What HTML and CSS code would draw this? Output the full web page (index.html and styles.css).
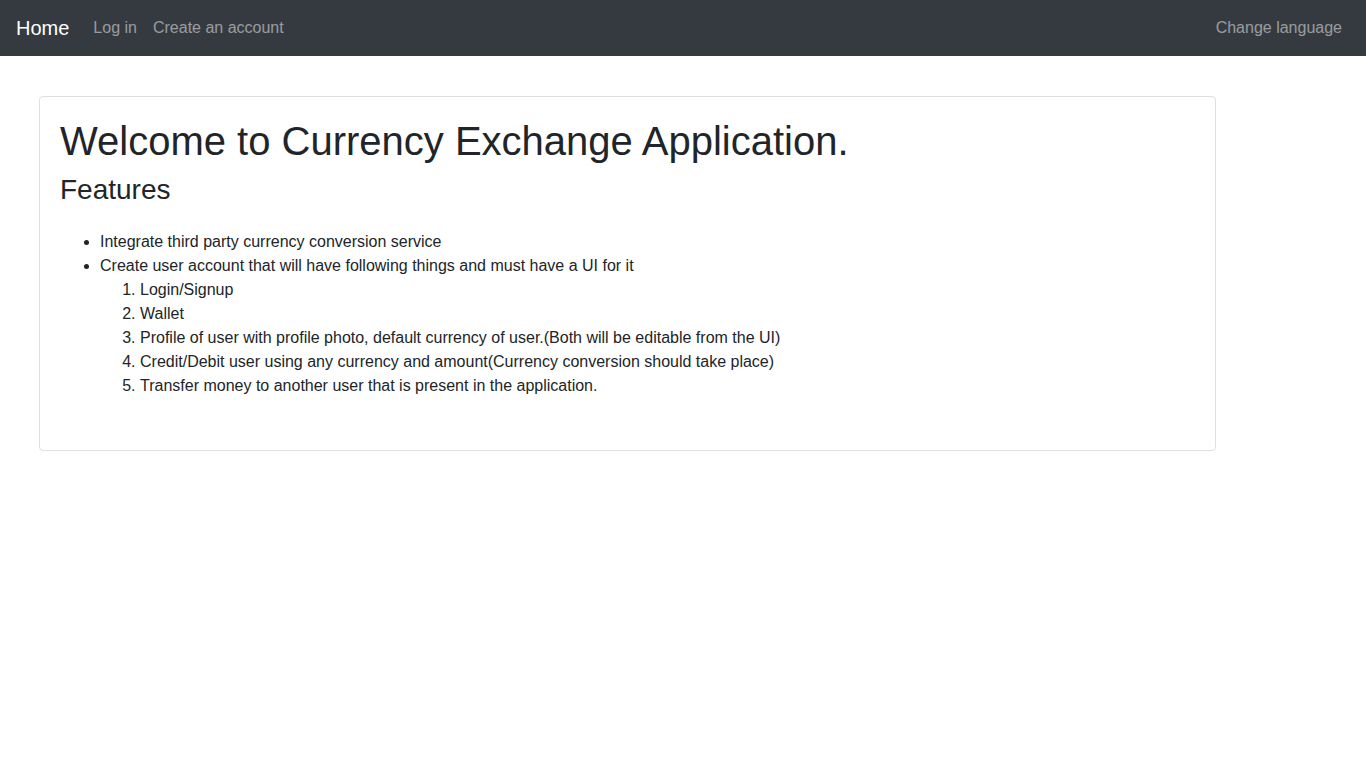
FILE: index.html
```html
<!DOCTYPE html>
<html lang="en">
<head>
<meta charset="utf-8">
<title>Currency Exchange</title>
<link rel="stylesheet" href="styles.css">
</head>
<body>
<nav class="navbar">
  <a class="brand" href="#">Home</a>
  <ul class="nav">
    <li><a class="nav-link" href="#">Log in</a></li>
    <li><a class="nav-link" href="#">Create an account</a></li>
  </ul>
  <ul class="nav nav-right">
    <li><a class="nav-link" href="#">Change language</a></li>
  </ul>
</nav>
<main class="main">
  <section class="card">
    <h1 class="title">Welcome to Currency Exchange Application.</h1>
    <h2 class="subtitle">Features</h2>
    <ul class="features">
      <li>Integrate third party currency conversion service</li>
      <li>Create user account that will have following things and must have a UI for it
        <ol class="sub">
          <li>Login/Signup</li>
          <li>Wallet</li>
          <li>Profile of user with profile photo, default currency of user.(Both will be editable from the UI)</li>
          <li>Credit/Debit user using any currency and amount(Currency conversion should take place)</li>
          <li>Transfer money to another user that is present in the application.</li>
        </ol>
      </li>
    </ul>
  </section>
</main>
</body>
</html>
```
FILE: styles.css
```css
* { box-sizing: border-box; }
body {
  margin: 0;
  font-family: "Liberation Sans", Arial, sans-serif;
  font-size: 16px;
  line-height: 1.5;
  color: #212529;
  background: #fff;
}
.navbar {
  display: flex;
  align-items: center;
  height: 56px;
  padding: 8px 16px;
  background: #343a40;
}
.brand {
  font-size: 20px;
  line-height: 30px;
  color: #fff;
  text-decoration: none;
  margin-right: 16px;
  padding: 5px 0;
}
.nav {
  display: flex;
  list-style: none;
  margin: 0;
  padding: 0;
}
.nav-right { margin-left: auto; }
.nav-link {
  display: block;
  padding: 8px;
  color: rgba(255, 255, 255, 0.5);
  text-decoration: none;
}
.main {
  padding: 40px 0 0 39px;
}
.card {
  width: 1177px;
  height: 355px;
  border: 1px solid #dfdfdf;
  border-radius: 4px;
  padding: 20px;
}
.title {
  margin: 0 0 8px;
  font-size: 40px;
  font-weight: 500;
  line-height: 1.2;
}
.subtitle {
  margin: 0 0 8px;
  font-size: 28px;
  font-weight: 500;
  line-height: 1.2;
}
.features {
  margin: 23px 0 16px;
  padding-left: 40px;
}
.sub {
  margin: 0;
  padding-left: 40px;
}
```
